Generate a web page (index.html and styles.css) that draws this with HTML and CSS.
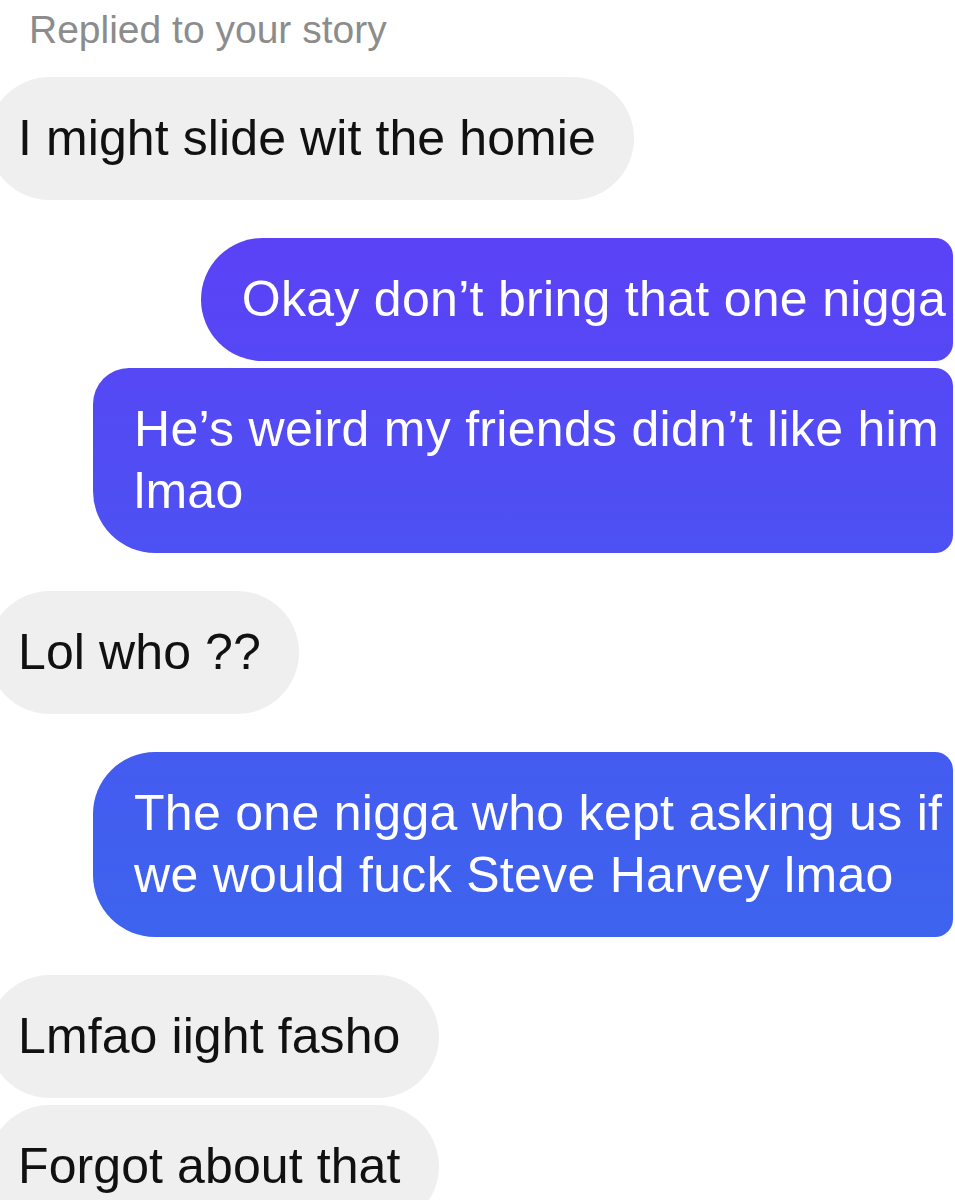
FILE: index.html
```html
<!DOCTYPE html>
<html lang="en">
<head>
<meta charset="utf-8">
<title>Chat</title>
<link rel="stylesheet" href="styles.css">
</head>
<body>
<main class="chat">
  <div class="reply-label">Replied to your story</div>
  <div class="group in">
    <div class="bubble">I might slide wit the homie</div>
  </div>
  <div class="group out">
    <div class="bubble first">Okay don’t bring that one nigga</div>
    <div class="bubble last">He’s weird my friends didn’t like him lmao</div>
  </div>
  <div class="group in">
    <div class="bubble">Lol who ??</div>
  </div>
  <div class="group out">
    <div class="bubble">The one nigga who kept asking us if we would fuck Steve Harvey lmao</div>
  </div>
  <div class="group in">
    <div class="bubble">Lmfao iight fasho</div>
    <div class="bubble">Forgot about that</div>
  </div>
</main>
</body>
</html>
```

FILE: styles.css
```css
html, body {
  margin: 0;
  padding: 0;
  background: #ffffff;
}

body {
  overflow: hidden;
  font-family: "Liberation Sans", Arial, sans-serif;
}

.chat {
  display: flex;
  flex-direction: column;
  gap: 38px;
}

.reply-label {
  padding: 8px 0 0 29px;
  margin-bottom: -13px;
  font-size: 39px;
  line-height: 44px;
  color: #8c8c8c;
}

.group {
  display: flex;
  flex-direction: column;
  gap: 7px;
}

.bubble {
  box-sizing: border-box;
  font-size: 50px;
  line-height: 62px;
  padding: 30px 38px 31px 30px;
  border-radius: 62px;
}

.group.in {
  align-items: flex-start;
}

.group.in .bubble {
  margin-left: -12px;
  background: #efefef;
  color: #111111;
  letter-spacing: 0.1px;
}

.group.out {
  align-items: flex-end;
}

.group.out .bubble {
  margin-right: 2px;
  max-width: 860px;
  padding: 30px 7px 31px 41px;
  border-radius: 62px 18px 18px 62px;
  color: #ffffff;
  letter-spacing: 0.3px;
  background: linear-gradient(to bottom, #6536f9 0%, #3171eb 100%) fixed;
}

.group.out .bubble.last {
  border-radius: 36px 18px 18px 62px;
}
```
